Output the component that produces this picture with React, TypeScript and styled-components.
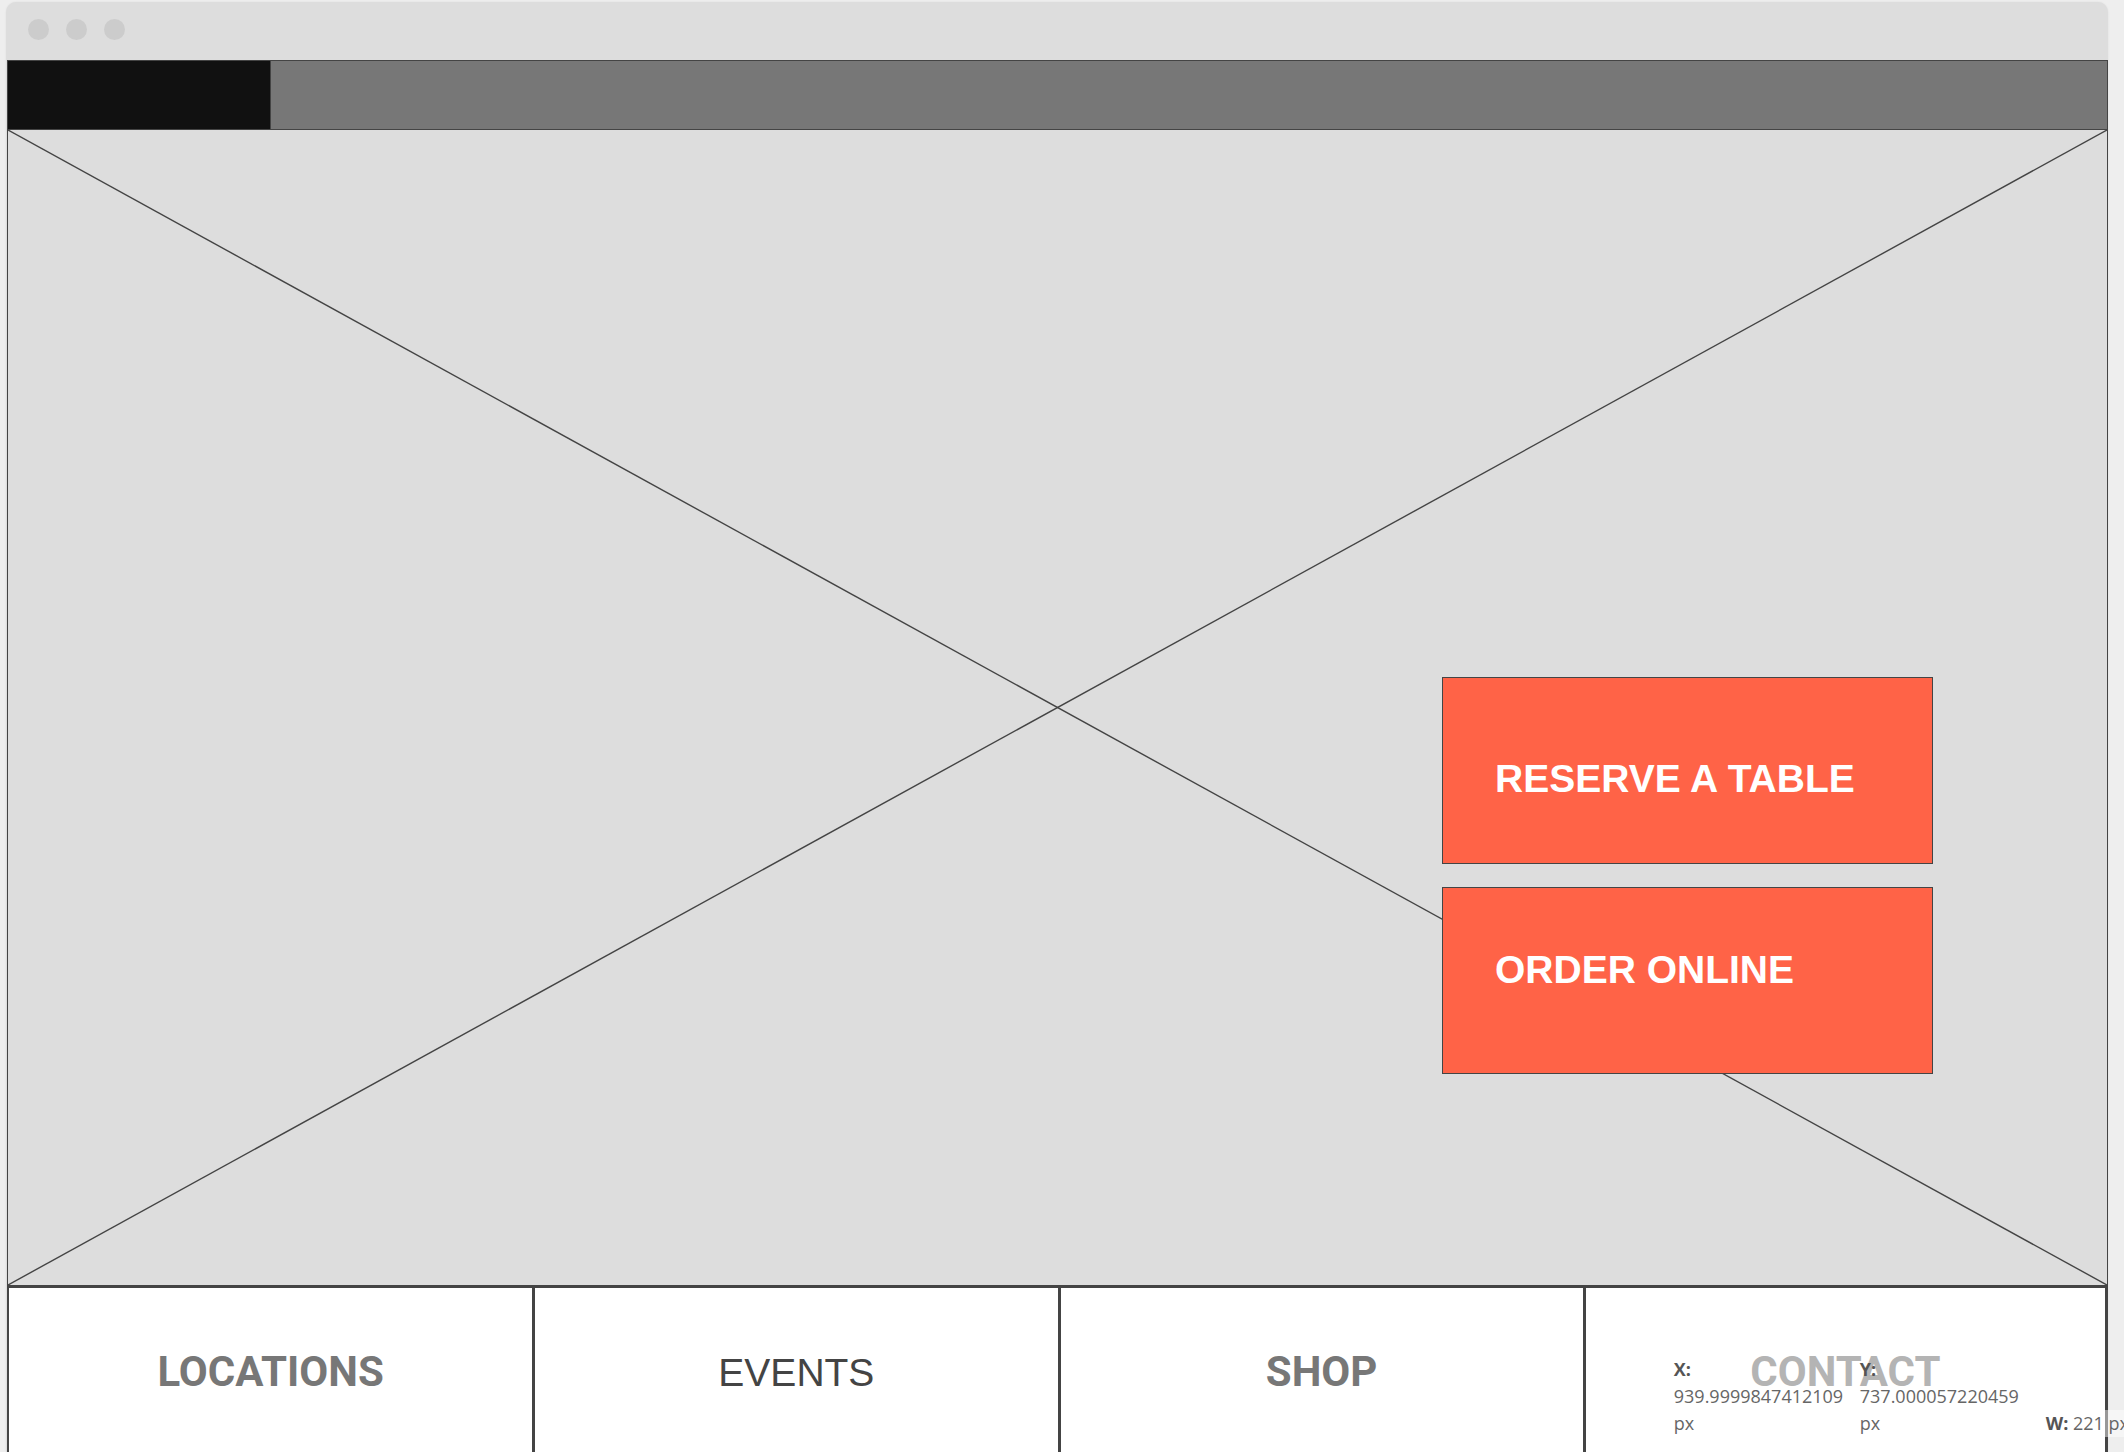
import React from "react";
import styled, { createGlobalStyle } from "styled-components";

const GlobalStyle = createGlobalStyle`
  html, body {
    margin: 0;
    padding: 0;
    overflow: hidden;
    background: #eeeeee;
  }
  body {
    font-family: "Liberation Sans", Arial, sans-serif;
  }
`;

const Page = styled.div`
  width: 2124px;
  height: 1452px;
  box-sizing: border-box;
  padding: 2px 0 0 6px;
  overflow: hidden;
`;

const Window = styled.div`
  width: 2102px;
  box-sizing: border-box;
  padding-left: 1px;
  background: #dddddd;
  border-radius: 10px 10px 0 0;
  box-shadow: 0 0 2px rgba(0, 0, 0, 0.08);
  display: flex;
  flex-direction: column;
`;

const TitleBar = styled.div`
  height: 58px;
  box-sizing: border-box;
  padding: 17px 0 0 21px;
  display: flex;
  align-items: flex-start;
  gap: 17px;
`;

const Dot = styled.span`
  width: 21px;
  height: 21px;
  border-radius: 50%;
  background: #cccccc;
`;

const Header = styled.div`
  height: 70px;
  box-sizing: border-box;
  border: 1px solid #444444;
  background: #777777;
  display: flex;
`;

const Logo = styled.div`
  width: 263px;
  background: #111111;
  border-right: 1px solid #444444;
  box-sizing: border-box;
`;

const Hero = styled.div`
  position: relative;
  height: 1155px;
  box-sizing: border-box;
  border-left: 1px solid #444444;
  border-right: 1px solid #444444;
  display: flex;
  justify-content: flex-end;
  align-items: flex-start;
  padding: 547px 174px 0 0;
`;

const Cross = styled.svg`
  position: absolute;
  inset: 0;
  width: 100%;
  height: 100%;
`;

const ButtonStack = styled.div`
  position: relative;
  z-index: 1;
  display: flex;
  flex-direction: column;
  gap: 23px;
`;

const CtaButton = styled.a<{ $top: number }>`
  display: block;
  width: 491px;
  height: 187px;
  box-sizing: border-box;
  padding: ${(p) => p.$top}px 0 0 52px;
  background: #ff6347;
  border: 1px solid #444444;
  color: #ffffff;
  font-family: "Liberation Sans", Arial, sans-serif;
  font-weight: 700;
  font-size: 39px;
  line-height: normal;
  text-decoration: none;
  white-space: nowrap;
`;

const Nav = styled.nav`
  display: grid;
  grid-template-columns: repeat(4, 1fr);
  height: 167px;
`;

const NavCell = styled.div<{ $first?: boolean; $last?: boolean }>`
  position: relative;
  background: #ffffff;
  box-sizing: border-box;
  padding-top: 4px;
  border-top: 3px solid #444444;
  border-left: ${(p) => (p.$first ? 2 : 3)}px solid #444444;
  border-right: ${(p) => (p.$last ? "3px solid #444444" : "none")};
  display: flex;
  align-items: center;
  justify-content: center;
`;

const NavLabel = styled.span<{ $bold?: boolean; $color: string }>`
  font-family: ${(p) =>
    p.$bold ? "Roboto, 'Liberation Sans', sans-serif" : "'Liberation Sans', Arial, sans-serif"};
  font-weight: ${(p) => (p.$bold ? 700 : 400)};
  font-size: ${(p) => (p.$bold ? 42 : 39)}px;
  color: ${(p) => p.$color};
  line-height: 1;
`;

const Measure = styled.div`
  position: absolute;
  left: 88px;
  top: 68px;
  display: flex;
  align-items: flex-end;
  font-family: "Open Sans", sans-serif;
  font-size: 18px;
  line-height: 27px;
  color: #666666;
  white-space: normal;
`;

const MeasureItem = styled.div`
  width: 186px;
  box-sizing: border-box;
  padding-right: 14px;
  flex: none;
  background: rgba(255, 255, 255, 0.45);
`;

const MeasureLabel = styled.b`
  font-weight: 700;
  color: #555555;
`;

const navItems = [
  { label: "LOCATIONS", bold: true, color: "#777777" },
  { label: "EVENTS", bold: false, color: "#444444" },
  { label: "SHOP", bold: true, color: "#777777" },
  { label: "CONTACT", bold: true, color: "#777777" },
];

const measures = [
  { label: "X:", value: "939.9999847412109 px" },
  { label: "Y:", value: "737.000057220459 px" },
  { label: "W:", value: "221 px" },
];

export default function App() {
  return (
    <>
      <GlobalStyle />
      <Page>
        <Window>
          <TitleBar>
            <Dot />
            <Dot />
            <Dot />
          </TitleBar>
          <Header>
            <Logo />
          </Header>
          <Hero>
            <Cross viewBox="0 0 100 100" preserveAspectRatio="none">
              <line x1="0" y1="0" x2="100" y2="100" stroke="#444444" strokeWidth="1.4" vectorEffect="non-scaling-stroke" />
              <line x1="100" y1="0" x2="0" y2="100" stroke="#444444" strokeWidth="1.4" vectorEffect="non-scaling-stroke" />
            </Cross>
            <ButtonStack>
              <CtaButton $top={79}>RESERVE A TABLE</CtaButton>
              <CtaButton $top={60}>ORDER ONLINE</CtaButton>
            </ButtonStack>
          </Hero>
          <Nav>
            {navItems.map((item, i) => (
              <NavCell key={item.label} $first={i === 0} $last={i === navItems.length - 1}>
                <NavLabel $bold={item.bold} $color={item.color}>
                  {item.label}
                </NavLabel>
                {i === navItems.length - 1 && (
                  <Measure>
                    {measures.map((m) => (
                      <MeasureItem key={m.label}>
                        <MeasureLabel>{m.label}</MeasureLabel> {m.value}
                      </MeasureItem>
                    ))}
                  </Measure>
                )}
              </NavCell>
            ))}
          </Nav>
        </Window>
      </Page>
    </>
  );
}
